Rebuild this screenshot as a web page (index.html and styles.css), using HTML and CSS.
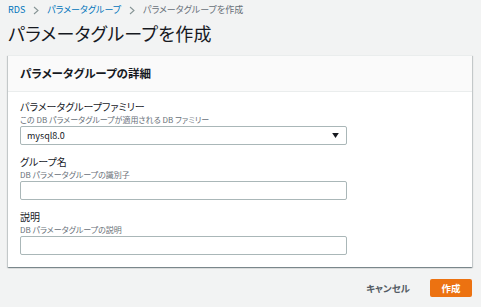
FILE: index.html
```html
<!DOCTYPE html>
<html lang="ja">
<head>
	<meta charset="UTF-8">
	<title>パラメータグループを作成</title>
	<link rel="stylesheet" href="styles.css">
</head>
<body>
	<div class="page">
		<div class="crumbs">
			<a href="#">RDS</a>
			<svg class="sep" width="6" height="9" viewBox="0 0 6 9"><path d="M1 1 L5 4.5 L1 8" fill="none" stroke="#879596" stroke-width="1.1"/></svg>
			<a href="#">パラメータグループ</a>
			<svg class="sep" width="6" height="9" viewBox="0 0 6 9"><path d="M1 1 L5 4.5 L1 8" fill="none" stroke="#879596" stroke-width="1.1"/></svg>
			<span class="current">パラメータグループを作成</span>
		</div>
		<h1 class="title">パラメータグループを作成</h1>

		<div class="card">
			<div class="card_head">パラメータグループの詳細</div>
			<div class="card_body">
				<div class="field">
					<div class="label">パラメータグループファミリー</div>
					<div class="desc">この DB パラメータグループが適用される DB ファミリー</div>
					<div class="select">
						<span>mysql8.0</span>
						<svg width="7" height="5" viewBox="0 0 8 6"><path d="M0 0 H8 L4 6 Z" fill="#16191f"/></svg>
					</div>
				</div>
				<div class="field">
					<div class="label">グループ名</div>
					<div class="desc">DB パラメータグループの識別子</div>
					<div class="input"></div>
				</div>
				<div class="field">
					<div class="label">説明</div>
					<div class="desc">DB パラメータグループの説明</div>
					<div class="input"></div>
				</div>
			</div>
		</div>

		<div class="actions">
			<a href="#" class="cancel">キャンセル</a>
			<a href="#" class="btn">作成</a>
		</div>
	</div>
</body>
</html>
```

FILE: styles.css
```css
* {
    margin: 0;
    padding: 0;
    box-sizing: border-box;
}
a {
    text-decoration: none;
}
body {
    background: #f2f3f3;
    font-family: "Noto Sans CJK JP", "Noto Sans", sans-serif;
    font-feature-settings: "palt";
    color: #16191f;
}
.page {
    padding: 4px 8px 0 8px;
}
.crumbs {
    display: flex;
    align-items: center;
    height: 12px;
    font-size: 9px;
    line-height: 12px;
}
.crumbs a {
    color: #0073bb;
}
.crumbs .sep {
    margin: 0 8px 0 8px;
}
.crumbs .current {
    color: #687078;
}
.title {
    font-size: 18px;
    font-weight: normal;
    line-height: 26px;
    margin-top: 4px;
    height: 35px;
    letter-spacing: 0.3px;
}
.card {
    background: #fff;
    width: 464px;
    border-top: 1px solid #eaeded;
    box-shadow: 0 1px 1px 0 rgba(0,28,36,0.3), 1px 1px 1px 0 rgba(0,28,36,0.15), -1px 1px 1px 0 rgba(0,28,36,0.15);
}
.card_head {
    background: #fafafa;
    border-bottom: 1px solid #eaeded;
    height: 36px;
    padding: 0 12px;
    font-size: 11.5px;
    font-weight: bold;
    line-height: 35px;
}
.card_body {
    padding: 8px 12px 12px 12px;
}
.field {
    margin-bottom: 10px;
}
.field:last-child {
    margin-bottom: 0;
}
.label {
    font-size: 10px;
    line-height: 14px;
}
.desc {
    font-size: 8px;
    line-height: 11px;
    color: #687078;
    margin-bottom: 1px;
}
.select,
.input {
    width: 327px;
    height: 19px;
    border: 1px solid #aab7b8;
    border-radius: 2px;
    background: #fff;
}
.select {
    display: flex;
    align-items: center;
    justify-content: space-between;
    padding: 0 7px 0 6px;
    font-size: 9px;
}
.actions {
    display: flex;
    justify-content: flex-end;
    align-items: center;
    gap: 20px;
    width: 464px;
    margin-top: 12px;
}
.cancel {
    color: #545b64;
    font-size: 9.5px;
    font-weight: bold;
}
.btn {
    display: block;
    width: 42px;
    height: 18px;
    line-height: 18px;
    background: #ec7211;
    border-radius: 2px;
    color: #fff;
    font-size: 9.5px;
    font-weight: bold;
    text-align: center;
}
```
